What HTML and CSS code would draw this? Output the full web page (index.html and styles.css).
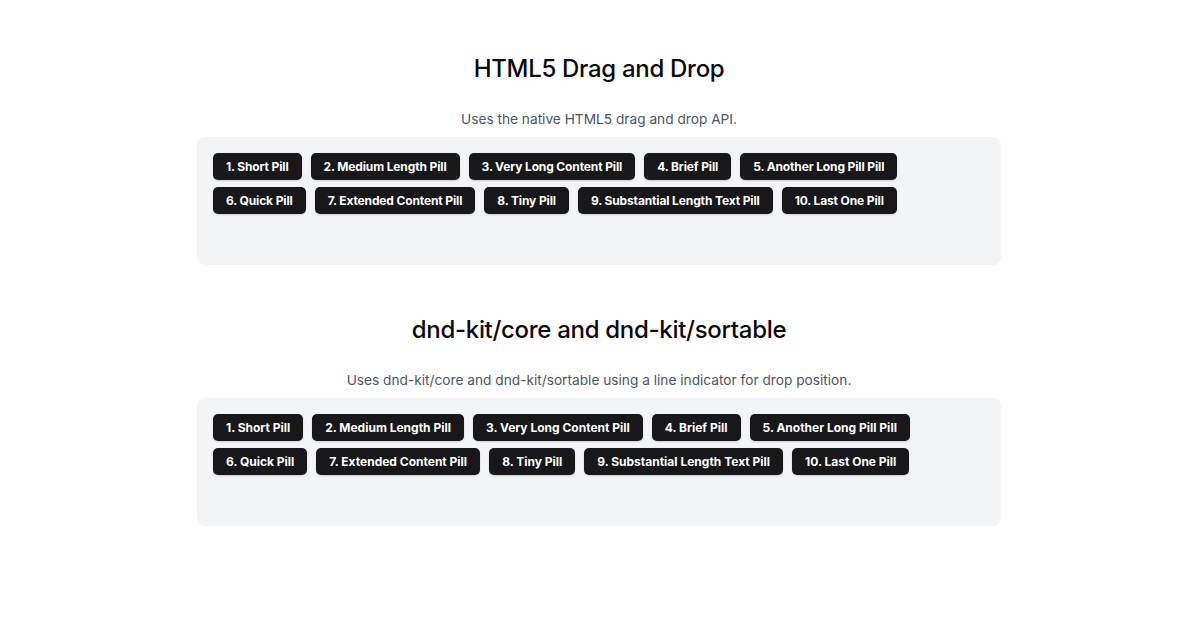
FILE: index.html
```html
<!DOCTYPE html>
<html lang="en">
<head>
<meta charset="utf-8">
<title>Drag and Drop</title>
<link rel="stylesheet" href="styles.css">
</head>
<body>
<main class="page">
  <section class="demo">
    <h2 class="demo-title">HTML5 Drag and Drop</h2>
    <p class="demo-desc">Uses the native HTML5 drag and drop API.</p>
    <div class="board board-native">
      <div class="pill">1. Short Pill</div>
      <div class="pill">2. Medium Length Pill</div>
      <div class="pill">3. Very Long Content Pill</div>
      <div class="pill">4. Brief Pill</div>
      <div class="pill">5. Another Long Pill Pill</div>
      <div class="pill">6. Quick Pill</div>
      <div class="pill">7. Extended Content Pill</div>
      <div class="pill">8. Tiny Pill</div>
      <div class="pill">9. Substantial Length Text Pill</div>
      <div class="pill">10. Last One Pill</div>
    </div>
  </section>
  <section class="demo">
    <h2 class="demo-title">dnd-kit/core and dnd-kit/sortable</h2>
    <p class="demo-desc">Uses dnd-kit/core and dnd-kit/sortable using a line indicator for drop position.</p>
    <div class="board">
      <div class="pill">1. Short Pill</div>
      <div class="pill">2. Medium Length Pill</div>
      <div class="pill">3. Very Long Content Pill</div>
      <div class="pill">4. Brief Pill</div>
      <div class="pill">5. Another Long Pill Pill</div>
      <div class="pill">6. Quick Pill</div>
      <div class="pill">7. Extended Content Pill</div>
      <div class="pill">8. Tiny Pill</div>
      <div class="pill">9. Substantial Length Text Pill</div>
      <div class="pill">10. Last One Pill</div>
    </div>
  </section>
</main>
</body>
</html>
```
FILE: styles.css
```css
* { box-sizing: border-box; }
html, body { margin: 0; padding: 0; background: #ffffff; }
body {
  font-family: Inter, "Noto Sans", "Liberation Sans", sans-serif;
  color: #111111;
}
.page {
  width: 804px;
  margin: 0 auto;
  padding-top: 55px;
  display: flex;
  flex-direction: column;
  gap: 51px;
  transform: translateX(-1px);
}
.demo {
  display: flex;
  flex-direction: column;
  align-items: stretch;
}
.demo-title {
  margin: 0;
  text-align: center;
  font-size: 24px;
  line-height: 28px;
  font-weight: 500;
  letter-spacing: -0.3px;
  color: #0a0a0a;
}
.demo-desc {
  margin: 26px 0 8px;
  text-align: center;
  font-size: 13.7px;
  line-height: 20px;
  color: #4b5563;
}
.board {
  background: #f3f4f6;
  border-radius: 8px;
  min-height: 128px;
  padding: 16px;
  display: flex;
  flex-wrap: wrap;
  align-content: flex-start;
  gap: 7px 9px;
}
.pill {
  background: #18181b;
  color: #ffffff;
  font-size: 12px;
  font-weight: 700;
  line-height: 15px;
  letter-spacing: 0;
  padding: 6px 13px;
  border-radius: 5px;
  box-shadow: 0 1px 2px rgba(0,0,0,0.15);
  white-space: nowrap;
}
.board-native .pill {
  letter-spacing: -0.13px;
}
```
